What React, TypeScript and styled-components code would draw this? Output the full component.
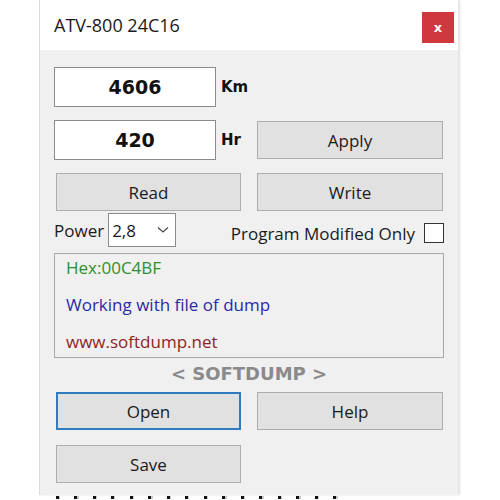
import { styled, createGlobalStyle } from "styled-components";

const GlobalStyle = createGlobalStyle`
  html, body {
    margin: 0;
    padding: 0;
    background: #ffffff;
  }
  body {
    font-family: "Open Sans", "Noto Sans", sans-serif;
  }
`;

const Page = styled.div`
  width: 500px;
  height: 500px;
  overflow: hidden;
  position: relative;
`;

const Window = styled.div`
  margin-left: 39px;
  width: 418px;
  height: 495px;
  background: #f0f0f0;
  border-left: 1px solid #dcdcdc;
  box-shadow: 2px 0 2px rgba(0, 0, 0, 0.12);
  display: flex;
  flex-direction: column;
`;

const TitleBar = styled.div`
  height: 50px;
  background: #ffffff;
  display: flex;
  align-items: center;
  justify-content: space-between;
  padding: 0 4px 0 14px;
  font-size: 18px;
  color: #1a1a1a;
`;

const CloseButton = styled.div`
  align-self: flex-start;
  width: 32px;
  height: 31px;
  margin-top: 12px;
  background: #d0383f;
  color: #ffffff;
  font-family: "DejaVu Sans", sans-serif;
  font-weight: bold;
  font-size: 13px;
  display: flex;
  align-items: center;
  justify-content: center;
`;

const Body = styled.div`
  padding: 17px 14px 0 14px;
  display: flex;
  flex-direction: column;
`;

const Row = styled.div<{ $mt?: number }>`
  display: flex;
  align-items: center;
  margin-top: ${({ $mt }) => $mt ?? 0}px;
`;

const NumberBox = styled.div`
  width: 160px;
  height: 38px;
  border: 1px solid #8a8a8a;
  background: #ffffff;
  display: flex;
  align-items: center;
  justify-content: center;
  font-family: "DejaVu Sans", sans-serif;
  font-weight: bold;
  font-size: 19px;
  color: #111;
`;

const UnitLabel = styled.span<{ $w: number }>`
  box-sizing: border-box;
  width: ${({ $w }) => $w}px;
  padding-left: 5px;
  font-family: "DejaVu Sans", sans-serif;
  font-weight: bold;
  font-size: 15px;
  color: #111;
`;

const ButtonGrid = styled.div<{ $mt: number }>`
  display: grid;
  grid-template-columns: 185px 186px;
  column-gap: 16px;
  margin-left: 2px;
  margin-top: ${({ $mt }) => $mt}px;
`;

const WinButton = styled.div<{ $focused?: boolean; $w?: number }>`
  box-sizing: border-box;
  width: ${({ $w }) => ($w ? `${$w}px` : "auto")};
  height: 38px;
  background: #e1e1e1;
  border: ${({ $focused }) =>
    $focused ? "2px solid #2f7bbf" : "1px solid #adadad"};
  display: flex;
  align-items: center;
  justify-content: center;
  font-size: 17px;
  color: #1a1a1a;
`;

const PowerRow = styled.div`
  display: flex;
  align-items: center;
  margin-top: 2px;
  height: 34px;
  font-size: 17px;
  color: #1a1a1a;
`;

const Select = styled.div`
  box-sizing: border-box;
  width: 68px;
  height: 34px;
  margin-left: 4px;
  border: 1px solid #8a8a8a;
  background: #ffffff;
  display: flex;
  align-items: center;
  justify-content: space-between;
  padding: 0 6px 0 3px;
`;

const CheckLabel = styled.span`
  margin-left: auto;
  margin-top: 6px;
  display: flex;
  align-items: center;
  gap: 9px;
`;

const CheckBox = styled.span`
  width: 18px;
  height: 18px;
  border: 1px solid #333;
  background: #fff;
`;

const InfoBox = styled.div`
  box-sizing: border-box;
  margin-top: 6px;
  height: 105px;
  overflow: hidden;
  border: 1px solid #a8a8a8;
  background: #f0f0f0;
  padding: 0 11px;
  display: flex;
  flex-direction: column;
  font-size: 17px;
`;

const InfoLine = styled.div<{ $color: string }>`
  flex: none;
  height: 37px;
  line-height: 28px;
  color: ${({ $color }) => $color};
`;

const Brand = styled.div`
  text-align: center;
  height: 34px;
  line-height: 31px;
  font-family: "DejaVu Sans", sans-serif;
  font-weight: bold;
  font-size: 18px;
  color: #8a8a8a;
`;

const DotStrip = styled.div`
  position: absolute;
  left: 56px;
  top: 496px;
  width: 290px;
  height: 3px;
  background-image: repeating-linear-gradient(
    90deg,
    #111 0px,
    #111 3px,
    #c8c8c8 3px,
    #c8c8c8 4px,
    transparent 4px,
    transparent 18.5px
  );
`;

export default function App() {
  return (
    <Page>
      <GlobalStyle />
      <Window>
        <TitleBar>
          <span>ATV-800 24C16</span>
          <CloseButton>x</CloseButton>
        </TitleBar>
        <Body>
          <Row>
            <NumberBox>4606</NumberBox>
            <UnitLabel $w={41}>Km</UnitLabel>
          </Row>
          <Row $mt={13}>
            <NumberBox>420</NumberBox>
            <UnitLabel $w={41}>Hr</UnitLabel>
            <WinButton $w={186}>Apply</WinButton>
          </Row>
          <ButtonGrid $mt={13}>
            <WinButton>Read</WinButton>
            <WinButton>Write</WinButton>
          </ButtonGrid>
          <PowerRow>
            <span>Power</span>
            <Select>
              <span>2,8</span>
              <svg width="12" height="8" viewBox="0 0 12 8">
                <path d="M1 1.5 L6 6 L11 1.5" fill="none" stroke="#444" strokeWidth="1.2" />
              </svg>
            </Select>
            <CheckLabel>
              Program Modified Only
              <CheckBox />
            </CheckLabel>
          </PowerRow>
          <InfoBox>
            <InfoLine $color="#2f8f2f">Hex:00C4BF</InfoLine>
            <InfoLine $color="#2a2aa8">Working with file of dump</InfoLine>
            <InfoLine $color="#8f1f1f">www.softdump.net</InfoLine>
          </InfoBox>
          <Brand>&lt; SOFTDUMP &gt;</Brand>
          <ButtonGrid $mt={0}>
            <WinButton $focused>Open</WinButton>
            <WinButton>Help</WinButton>
          </ButtonGrid>
          <ButtonGrid $mt={15}>
            <WinButton>Save</WinButton>
          </ButtonGrid>
        </Body>
      </Window>
      <DotStrip />
    </Page>
  );
}
